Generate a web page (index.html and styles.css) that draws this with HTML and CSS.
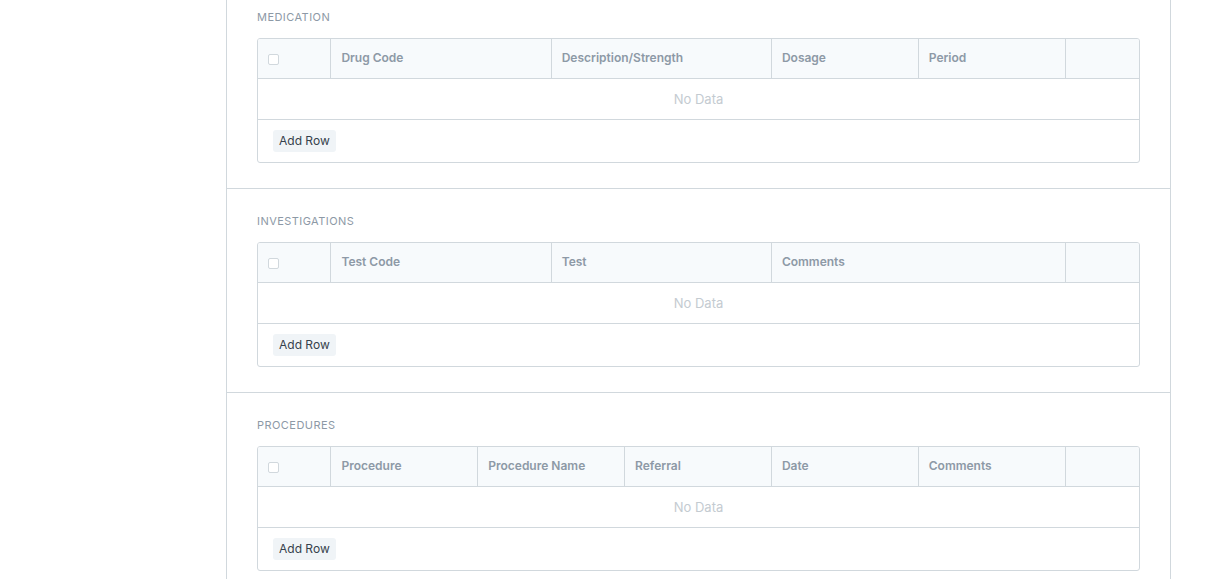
FILE: index.html
```html
<!DOCTYPE html>
<html>
<head>
<meta charset="utf-8">
<link rel="stylesheet" href="styles.css">
</head>
<body>
<div class="page">
  <div class="panel">
    <section class="section">
      <div class="label">MEDICATION</div>
      <div class="grid">
        <div class="head">
          <div class="cell c1 check"><span class="box"></span></div>
          <div class="cell c3">Drug Code</div>
          <div class="cell c3">Description/Strength</div>
          <div class="cell c2">Dosage</div>
          <div class="cell c2">Period</div>
          <div class="cell c1 last"></div>
        </div>
        <div class="empty">No Data</div>
        <div class="foot"><button class="btn">Add Row</button></div>
      </div>
    </section>
    <section class="section">
      <div class="label">INVESTIGATIONS</div>
      <div class="grid">
        <div class="head">
          <div class="cell c1 check"><span class="box"></span></div>
          <div class="cell c3">Test Code</div>
          <div class="cell c3">Test</div>
          <div class="cell c4">Comments</div>
          <div class="cell c1 last"></div>
        </div>
        <div class="empty">No Data</div>
        <div class="foot"><button class="btn">Add Row</button></div>
      </div>
    </section>
    <section class="section">
      <div class="label">PROCEDURES</div>
      <div class="grid">
        <div class="head">
          <div class="cell c1 check"><span class="box"></span></div>
          <div class="cell c2">Procedure</div>
          <div class="cell c2">Procedure Name</div>
          <div class="cell c2">Referral</div>
          <div class="cell c2">Date</div>
          <div class="cell c2">Comments</div>
          <div class="cell c1 last"></div>
        </div>
        <div class="empty">No Data</div>
        <div class="foot"><button class="btn">Add Row</button></div>
      </div>
    </section>
  </div>
</div>
</body>
</html>
```

FILE: styles.css
```css
html, body {
  margin: 0;
  padding: 0;
  background: #ffffff;
  font-family: Inter, "Noto Sans", "Liberation Sans", sans-serif;
  color: #36414c;
}
.page {
  padding-left: 226px;
  width: 945px;
  margin-top: -15px;
}
.panel {
  border-left: 1px solid #d1d8dd;
  border-right: 1px solid #d1d8dd;
}
.section {
  padding: 24px 30px 25px;
  border-bottom: 1px solid #d1d8dd;
}
.label {
  font-size: 11px;
  line-height: 16px;
  letter-spacing: 0.45px;
  color: #8d99a6;
  margin-bottom: 13px;
}
.grid {
  border: 1px solid #d1d8dd;
  border-radius: 3px;
  overflow: hidden;
}
.head {
  display: grid;
  grid-template-columns: repeat(12, 1fr);
  height: 39px;
  background: #f7fafc;
  border-bottom: 1px solid #d1d8dd;
}
.cell {
  display: flex;
  align-items: center;
  padding: 0 10px 2px;
  font-size: 12px;
  font-weight: 600;
  color: #8d99a6;
  border-right: 1px solid #d1d8dd;
  white-space: nowrap;
  overflow: hidden;
}
.cell.last { border-right: none; }
.c1 { grid-column: span 1; }
.c2 { grid-column: span 2; }
.c3 { grid-column: span 3; }
.c4 { grid-column: span 4; }
.check { padding: 0 0 0 10px; }
.box {
  display: block;
  width: 9px;
  height: 9px;
  margin-top: 1px;
  border: 1px solid #d1d8dd;
  border-radius: 2px;
  background: #ffffff;
}
.empty {
  height: 40px;
  display: flex;
  align-items: center;
  justify-content: center;
  font-size: 13px;
  color: #c4cbd1;
  border-bottom: 1px solid #d1d8dd;
}
.foot {
  height: 42px;
  display: flex;
  align-items: center;
  padding: 0 15px;
}
.btn {
  font-family: Inter, "Noto Sans", "Liberation Sans", sans-serif;
  font-size: 12px;
  color: #36414c;
  background: #f0f4f7;
  border: none;
  border-radius: 3px;
  height: 22px;
  padding: 0 6px 1px;
  margin: 0;
}
```
